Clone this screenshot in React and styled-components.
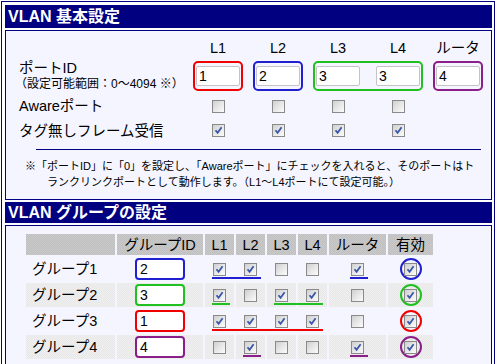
import React from "react";
import styled, { createGlobalStyle } from "styled-components";

const NAVY = "#000080";
const FONT = `"Liberation Sans", "Noto Sans CJK JP", sans-serif`;
const RED = "#f00000";
const BLUE = "#2020d0";
const GREEN = "#20c020";
const PURPLE = "#8a1f8a";

const GlobalStyle = createGlobalStyle`
  html, body { margin: 0; padding: 0; background: #fff; }
  body { font-family: ${FONT}; color: #000; }
`;

const Frame = styled.div`
  margin: 1px 0 0 1px;
  width: 494px;
  box-sizing: border-box;
  border: 1px solid ${NAVY};
  padding: 3px 2px 3px 3px;
  display: flex;
  flex-direction: column;
  gap: 2px;
  background: #fff;
`;

const SectionTitle = styled.div`
  background: ${NAVY};
  color: #fff;
  font-weight: bold;
  font-size: 16px;
  height: ${({ $h }) => $h}px;
  line-height: ${({ $h }) => $h}px;
  padding-left: 3px;
  white-space: nowrap;
`;

const Panel = styled.div`
  border: 1px solid ${NAVY};
  background: #f5f5ff;
  padding: ${({ $pad }) => $pad};
`;

/* ---- basic settings ---- */
const PortGrid = styled.div`
  display: grid;
  grid-template-columns: 169px repeat(5, 60px);
  grid-template-rows: 25px 31px 30px 19px;
  align-items: center;
  justify-items: center;
  padding-left: 13px;
  font-size: 14.5px;
  line-height: 16px;
`;

const RowLabel = styled.div`
  justify-self: start;
  white-space: nowrap;
`;

const SubLabel = styled.div`
  font-size: 12px;
  margin-left: -4px;
`;

const ColHead = styled.div`
  white-space: nowrap;
`;

const Outline = styled.div`
  grid-column: ${({ $span }) => `span ${$span}`};
  display: flex;
  gap: 16px;
  padding: 3px 1px;
  border: 2px solid ${({ $color }) => $color};
  border-radius: 5px;
`;

const TextField = styled.input`
  box-sizing: border-box;
  width: 44px;
  height: 20px;
  border: 1px solid #c4c4c4;
  border-radius: 2px;
  background: #fff;
  padding: 0 2px;
  font-family: ${FONT};
  font-size: 14px;
  color: #000;
  outline: none;
`;

const Divider = styled.div`
  height: 1px;
  background: ${NAVY};
  margin: 9px 10px 0 30px;
`;

const Note = styled.div`
  margin: 8px 0 0 19px;
  font-size: 11px;
  line-height: 16px;
  white-space: nowrap;
`;

const NoteLine = styled.div`
  padding-left: ${({ $indent }) => ($indent ? 22 : 0)}px;
`;

/* ---- checkbox ---- */
const Box = styled.span`
  display: block;
  width: 13px;
  height: 13px;
  box-sizing: border-box;
  border: 1px solid #8a8a8a;
  background: linear-gradient(135deg, #cfcfcf 0%, #e9e9e9 55%, #fbfbfb 100%);
  margin-left: ${({ $shift }) => ($shift ? 2 : 0)}px;
  svg { display: block; }
`;

function Check({ on, shift }) {
  return (
    <Box role="checkbox" aria-checked={!!on} $shift={shift}>
      {on ? (
        <svg width="11" height="11" viewBox="0 0 11 11">
          <path d="M2.5 5.2 L4.6 7.8 L8.6 2.2" fill="none" stroke="#3a56a8" strokeWidth="1.8" />
        </svg>
      ) : null}
    </Box>
  );
}

/* ---- group table ---- */
const GroupTable = styled.table`
  border-collapse: separate;
  border-spacing: 2px;
  font-size: 14.5px;
  line-height: 16px;
  table-layout: fixed;
`;

const HeadCell = styled.th`
  width: ${({ $w }) => $w}px;
  height: 21px;
  padding: 0;
  font-weight: normal;
  text-align: center;
  white-space: nowrap;
  background: repeating-conic-gradient(#c0c0c0 0 25%, #c9c9c9 0 50%) 0 0 / 2px 2px;
`;

const Cell = styled.td`
  height: 24px;
  padding: 0;
  position: relative;
  vertical-align: middle;
  white-space: nowrap;
  text-align: ${({ $left }) => ($left ? "left" : "center")};
  padding-left: ${({ $left }) => ($left ? 6 : 0)}px;
  background: ${({ $shade }) =>
    $shade ? "repeating-conic-gradient(#e8e8e8 0 25%, #efefef 0 50%) 0 0 / 2px 2px" : "transparent"};
  & > span { margin-left: auto; margin-right: auto; }
  &::after {
    content: "";
    display: ${({ $mark }) => ($mark ? "block" : "none")};
    position: absolute;
    top: 20px;
    height: 2px;
    background: ${({ $markColor }) => $markColor};
    left: ${({ $mark }) => ($mark === "start" || $mark === "single" ? "calc(50% - 8px)" : "0")};
    right: ${({ $mark }) => ($mark === "end" || $mark === "single" ? "calc(50% - 10px)" : "-2px")};
  }
`;

const GroupField = styled.input`
  box-sizing: border-box;
  width: 50px;
  height: 22px;
  border: 2px solid ${({ $color }) => $color};
  border-radius: 4px;
  background: #fff;
  padding: 0 3px;
  font-family: ${FONT};
  font-size: 14px;
  color: #000;
  outline: none;
  display: block;
  margin: 0 auto;
`;

const Ring = styled.span`
  display: flex;
  align-items: center;
  justify-content: center;
  width: 22px;
  height: 22px;
  margin: 0 auto;
  box-sizing: border-box;
  border: 2px solid ${({ $color }) => $color};
  border-radius: 50%;
`;

const groups = [
  { name: "グループ1", id: "2", color: BLUE, ports: [1, 1, 0, 0], marks: ["start", "end", null, null], router: 1, routerMark: true },
  { name: "グループ2", id: "3", color: GREEN, ports: [1, 0, 1, 1], marks: ["single", null, "start", "end"], router: 0, routerMark: false },
  { name: "グループ3", id: "1", color: RED, ports: [1, 1, 1, 1], marks: ["start", "mid", "mid", "end"], router: 0, routerMark: false },
  { name: "グループ4", id: "4", color: PURPLE, ports: [0, 1, 0, 0], marks: [null, "single", null, null], router: 1, routerMark: true },
];

export default function App() {
  return (
    <>
      <GlobalStyle />
      <Frame>
        <SectionTitle $h={23}>VLAN 基本設定</SectionTitle>
        <Panel $pad="4px 0 9px 0">
          <PortGrid>
            <span />
            <ColHead>L1</ColHead>
            <ColHead>L2</ColHead>
            <ColHead>L3</ColHead>
            <ColHead>L4</ColHead>
            <ColHead>ルータ</ColHead>

            <RowLabel>
              <div>ポートID</div>
              <SubLabel>（設定可能範囲：0〜4094 ※）</SubLabel>
            </RowLabel>
            <Outline $color={RED} $span={1}>
              <TextField readOnly value="1" />
            </Outline>
            <Outline $color={BLUE} $span={1}>
              <TextField readOnly value="2" />
            </Outline>
            <Outline $color={GREEN} $span={2}>
              <TextField readOnly value="3" />
              <TextField readOnly value="3" />
            </Outline>
            <Outline $color={PURPLE} $span={1}>
              <TextField readOnly value="4" />
            </Outline>

            <RowLabel>Awareポート</RowLabel>
            <Check />
            <Check />
            <Check />
            <Check />
            <span />

            <RowLabel>タグ無しフレーム受信</RowLabel>
            <Check on />
            <Check on />
            <Check on />
            <Check on />
            <span />
          </PortGrid>
          <Divider />
          <Note>
            <NoteLine>※「ポートID」に「0」を設定し、「Awareポート」にチェックを入れると、そのポートはト</NoteLine>
            <NoteLine $indent>ランクリンクポートとして動作します。（L1〜L4ポートにて設定可能。）</NoteLine>
          </Note>
        </Panel>

        <SectionTitle $h={21}>VLAN グループの設定</SectionTitle>
        <Panel $pad="6px 0 40px 18px">
          <GroupTable>
            <thead>
              <tr>
                <HeadCell $w={89} />
                <HeadCell $w={86}>グループID</HeadCell>
                <HeadCell $w={29}>L1</HeadCell>
                <HeadCell $w={29}>L2</HeadCell>
                <HeadCell $w={29}>L3</HeadCell>
                <HeadCell $w={29}>L4</HeadCell>
                <HeadCell $w={57}>ルータ</HeadCell>
                <HeadCell $w={45}>有効</HeadCell>
              </tr>
            </thead>
            <tbody>
              {groups.map((g, i) => {
                const shade = i % 2 === 1;
                return (
                  <tr key={g.name}>
                    <Cell $left $shade={shade}>{g.name}</Cell>
                    <Cell $shade={shade}>
                      <GroupField readOnly value={g.id} $color={g.color} />
                    </Cell>
                    {g.ports.map((p, j) => (
                      <Cell key={j} $shade={shade} $mark={g.marks[j]} $markColor={g.color}>
                        <Check on={p} shift />
                      </Cell>
                    ))}
                    <Cell $shade={shade} $mark={g.routerMark ? "single" : null} $markColor={g.color}>
                      <Check on={g.router} shift />
                    </Cell>
                    <Cell $shade={shade}>
                      <Ring $color={g.color}>
                        <Check on />
                      </Ring>
                    </Cell>
                  </tr>
                );
              })}
            </tbody>
          </GroupTable>
        </Panel>
      </Frame>
    </>
  );
}
